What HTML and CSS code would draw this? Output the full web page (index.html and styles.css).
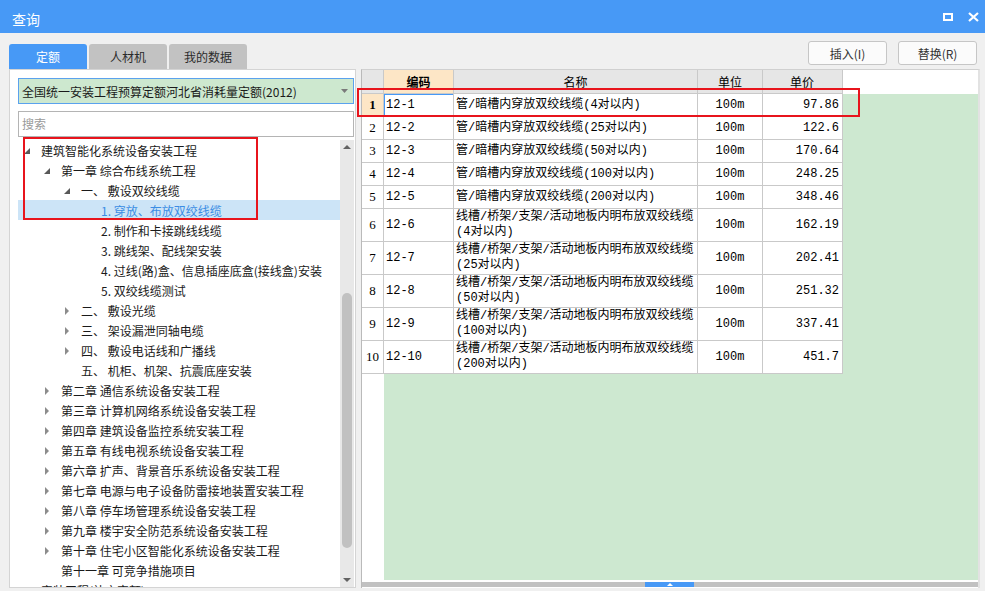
FILE: index.html
```html
<!DOCTYPE html>
<html lang="zh-CN">
<head>
<meta charset="utf-8">
<title>查询</title>
<link rel="stylesheet" href="styles.css">
</head>
<body>
<header class="titlebar">
  <span class="title">查询</span>
  <div class="winbtns">
    <svg class="ico" width="10" height="8" viewBox="0 0 10 8"><rect x="1" y="1" width="8" height="6" fill="none" stroke="#fff" stroke-width="2"/></svg>
    <svg class="ico" width="11" height="10" viewBox="0 0 11 10"><path d="M1 1L10 9M10 1L1 9" stroke="#fff" stroke-width="2.2" fill="none"/></svg>
  </div>
</header>
<div class="toolbar">
  <div class="tabs">
    <div class="tab active">定额</div>
    <div class="tab">人材机</div>
    <div class="tab">我的数据</div>
  </div>
  <div class="actions">
    <button class="btn">插入(I)</button>
    <button class="btn">替换(R)</button>
  </div>
</div>
<div class="content">
  <aside class="left">
    <div class="select"><span>全国统一安装工程预算定额河北省消耗量定额(2012)</span><svg class="caret" width="7" height="4" viewBox="0 0 7 4"><polygon points="0,0 7,0 3.5,4" fill="#7a7a7a"/></svg></div>
    <div class="search">搜索</div>
    <div class="treewrap">
      <ul class="tree">
        <li class="row l0"><span class="tg"><svg class="ex" width="6" height="6" viewBox="0 0 6 6"><polygon points="6,0 6,6 0,6"/></svg></span><span>建筑智能化系统设备安装工程</span></li>
        <li class="row l1"><span class="tg"><svg class="ex" width="6" height="6" viewBox="0 0 6 6"><polygon points="6,0 6,6 0,6"/></svg></span><span>第一章 综合布线系统工程</span></li>
        <li class="row l2"><span class="tg"><svg class="ex" width="6" height="6" viewBox="0 0 6 6"><polygon points="6,0 6,6 0,6"/></svg></span><span>一、 敷设双绞线缆</span></li>
        <li class="row l3 selected"><span class="tg"></span><span>1. 穿放、布放双绞线缆</span></li>
        <li class="row l3"><span class="tg"></span><span>2. 制作和卡接跳线线缆</span></li>
        <li class="row l3"><span class="tg"></span><span>3. 跳线架、配线架安装</span></li>
        <li class="row l3"><span class="tg"></span><span>4. 过线(路)盒、信息插座底盒(接线盒)安装</span></li>
        <li class="row l3"><span class="tg"></span><span>5. 双绞线缆测试</span></li>
        <li class="row l2"><span class="tg"><svg class="co" width="4" height="8" viewBox="0 0 4 8"><polygon points="0,0 4,4 0,8"/></svg></span><span>二、 敷设光缆</span></li>
        <li class="row l2"><span class="tg"><svg class="co" width="4" height="8" viewBox="0 0 4 8"><polygon points="0,0 4,4 0,8"/></svg></span><span>三、 架设漏泄同轴电缆</span></li>
        <li class="row l2"><span class="tg"><svg class="co" width="4" height="8" viewBox="0 0 4 8"><polygon points="0,0 4,4 0,8"/></svg></span><span>四、 敷设电话线和广播线</span></li>
        <li class="row l2"><span class="tg"></span><span>五、 机柜、机架、抗震底座安装</span></li>
        <li class="row l1"><span class="tg"><svg class="co" width="4" height="8" viewBox="0 0 4 8"><polygon points="0,0 4,4 0,8"/></svg></span><span>第二章 通信系统设备安装工程</span></li>
        <li class="row l1"><span class="tg"><svg class="co" width="4" height="8" viewBox="0 0 4 8"><polygon points="0,0 4,4 0,8"/></svg></span><span>第三章 计算机网络系统设备安装工程</span></li>
        <li class="row l1"><span class="tg"><svg class="co" width="4" height="8" viewBox="0 0 4 8"><polygon points="0,0 4,4 0,8"/></svg></span><span>第四章 建筑设备监控系统安装工程</span></li>
        <li class="row l1"><span class="tg"><svg class="co" width="4" height="8" viewBox="0 0 4 8"><polygon points="0,0 4,4 0,8"/></svg></span><span>第五章 有线电视系统设备安装工程</span></li>
        <li class="row l1"><span class="tg"><svg class="co" width="4" height="8" viewBox="0 0 4 8"><polygon points="0,0 4,4 0,8"/></svg></span><span>第六章 扩声、背景音乐系统设备安装工程</span></li>
        <li class="row l1"><span class="tg"><svg class="co" width="4" height="8" viewBox="0 0 4 8"><polygon points="0,0 4,4 0,8"/></svg></span><span>第七章 电源与电子设备防雷接地装置安装工程</span></li>
        <li class="row l1"><span class="tg"><svg class="co" width="4" height="8" viewBox="0 0 4 8"><polygon points="0,0 4,4 0,8"/></svg></span><span>第八章 停车场管理系统设备安装工程</span></li>
        <li class="row l1"><span class="tg"><svg class="co" width="4" height="8" viewBox="0 0 4 8"><polygon points="0,0 4,4 0,8"/></svg></span><span>第九章 楼宇安全防范系统设备安装工程</span></li>
        <li class="row l1"><span class="tg"><svg class="co" width="4" height="8" viewBox="0 0 4 8"><polygon points="0,0 4,4 0,8"/></svg></span><span>第十章 住宅小区智能化系统设备安装工程</span></li>
        <li class="row l1"><span class="tg"></span><span>第十一章 可竞争措施项目</span></li>
        <li class="row l0"><span class="tg"><svg class="co" width="4" height="8" viewBox="0 0 4 8"><polygon points="0,0 4,4 0,8"/></svg></span><span>安装工程(补充定额)</span></li>
      </ul>
      <div class="vscroll">
        <div class="varr"><svg width="8" height="4" viewBox="0 0 8 4"><polygon points="0,4 4,0 8,4" fill="#626262"/></svg></div>
        <div class="vthumb"></div>
        <div class="vspace"></div>
        <div class="varr"><svg width="8" height="4" viewBox="0 0 8 4"><polygon points="0,0 8,0 4,4" fill="#626262"/></svg></div>
      </div>
    </div>
  </aside>
  <section class="grid">
    <div class="gbody">
      <div class="grow ghead">
        <div class="c num"></div>
        <div class="c code hl"><b>编码</b></div>
        <div class="c name ctr">名称</div>
        <div class="c unit">单位</div>
        <div class="c price ctr">单价</div>
        <div class="fill"></div>
      </div>
      <div class="grow r1"><div class="c num cur">1</div><div class="c code sel">12-1</div><div class="c name"><span>管/暗槽内穿放双绞线缆(4对以内)</span></div><div class="c unit">100m</div><div class="c price">97.86</div><div class="fill"></div></div>
      <div class="grow r1"><div class="c num">2</div><div class="c code">12-2</div><div class="c name"><span>管/暗槽内穿放双绞线缆(25对以内)</span></div><div class="c unit">100m</div><div class="c price">122.6</div><div class="fill"></div></div>
      <div class="grow r1"><div class="c num">3</div><div class="c code">12-3</div><div class="c name"><span>管/暗槽内穿放双绞线缆(50对以内)</span></div><div class="c unit">100m</div><div class="c price">170.64</div><div class="fill"></div></div>
      <div class="grow r1"><div class="c num">4</div><div class="c code">12-4</div><div class="c name"><span>管/暗槽内穿放双绞线缆(100对以内)</span></div><div class="c unit">100m</div><div class="c price">248.25</div><div class="fill"></div></div>
      <div class="grow r1"><div class="c num">5</div><div class="c code">12-5</div><div class="c name"><span>管/暗槽内穿放双绞线缆(200对以内)</span></div><div class="c unit">100m</div><div class="c price">348.46</div><div class="fill"></div></div>
      <div class="grow r2"><div class="c num">6</div><div class="c code">12-6</div><div class="c name"><span>线槽/桥架/支架/活动地板内明布放双绞线缆<br>(4对以内)</span></div><div class="c unit">100m</div><div class="c price">162.19</div><div class="fill"></div></div>
      <div class="grow r2"><div class="c num">7</div><div class="c code">12-7</div><div class="c name"><span>线槽/桥架/支架/活动地板内明布放双绞线缆<br>(25对以内)</span></div><div class="c unit">100m</div><div class="c price">202.41</div><div class="fill"></div></div>
      <div class="grow r2"><div class="c num">8</div><div class="c code">12-8</div><div class="c name"><span>线槽/桥架/支架/活动地板内明布放双绞线缆<br>(50对以内)</span></div><div class="c unit">100m</div><div class="c price">251.32</div><div class="fill"></div></div>
      <div class="grow r2"><div class="c num">9</div><div class="c code">12-9</div><div class="c name"><span>线槽/桥架/支架/活动地板内明布放双绞线缆<br>(100对以内)</span></div><div class="c unit">100m</div><div class="c price">337.41</div><div class="fill"></div></div>
      <div class="grow r2"><div class="c num">10</div><div class="c code">12-10</div><div class="c name"><span>线槽/桥架/支架/活动地板内明布放双绞线缆<br>(200对以内)</span></div><div class="c unit">100m</div><div class="c price">451.7</div><div class="fill"></div></div>
      <div class="grow gempty"><div class="c num blank"></div><div class="fill"></div></div>
    </div>
    <div class="hscroll"><div class="hthumb"><svg width="6" height="3" viewBox="0 0 6 3"><polygon points="0,3 3,0 6,3" fill="#fff"/></svg></div></div>
  </section>
</div>
<div class="mark mark-tree"></div>
<div class="mark mark-row"></div>
</body>
</html>
```
FILE: styles.css
```css
* { box-sizing: border-box; }
html, body { margin: 0; padding: 0; }
body {
  width: 985px;
  height: 591px;
  overflow: hidden;
  position: relative;
  background: #f0f0f0;
  font-family: "Noto Sans CJK SC", "Microsoft YaHei", sans-serif;
  font-size: 12px;
  color: #1e1e1e;
}

/* title bar */
.titlebar {
  height: 33px;
  background: #4799f6;
  color: #fff;
  display: flex;
  align-items: center;
  padding: 0 6px 0 12px;
}
.title { font-size: 14px; padding-top: 4px; }
.winbtns { margin-left: auto; display: flex; align-items: center; gap: 15px; }
.ico { display: block; }

/* toolbar */
.toolbar {
  height: 36px;
  display: flex;
  justify-content: space-between;
  padding: 0 8px 0 9px;
}
.tabs { display: flex; gap: 2px; align-self: flex-end; }
.tab {
  width: 78px;
  height: 25px;
  line-height: 25px;
  text-align: center;
  background: #c2c2c2;
  color: #2b2b2b;
  border-radius: 3px 3px 0 0;
  font-size: 12px;
}
.tab.active { background: #4799f6; color: #fff; }
.actions { display: flex; gap: 11px; padding-top: 8px; }
.btn {
  width: 79px;
  height: 24px;
  padding: 0;
  border: 1px solid #c6c6c6;
  border-radius: 3px;
  background: #fbfbfb;
  color: #333;
  font-family: "Noto Sans CJK SC", sans-serif;
  font-size: 12px;
}

/* content */
.content {
  display: flex;
  gap: 5px;
  height: 519px;
  padding: 0 5px 0 9px;
}
.left {
  width: 347px;
  flex: none;
  background: #fff;
  border: 1px solid #d4d4d4;
  padding: 8px 1px 0 8px;
  display: flex;
  flex-direction: column;
  overflow: hidden;
}
.select {
  height: 26px;
  border: 1px solid #5aa2ee;
  background: #cde8cf;
  color: #1a1a1a;
  display: flex;
  align-items: center;
  justify-content: space-between;
  padding: 0 5px 0 3px;
  white-space: nowrap;
}
.caret { display: block; }
.search {
  margin-top: 7px;
  height: 26px;
  border: 1px solid #b4b4b4;
  color: #9a9a9a;
  line-height: 24px;
  padding-left: 3px;
}
.treewrap {
  margin-top: 3px;
  flex: 1;
  min-height: 0;
  display: flex;
}
.tree {
  flex: 1;
  margin: 0;
  padding: 0;
  list-style: none;
  overflow: hidden;
}
.row {
  height: 20px;
  display: flex;
  align-items: center;
  white-space: nowrap;
  color: #1a1a1a;
  padding-top: 1px;
}
.row.l1 { padding-left: 20px; }
.row.l2 { padding-left: 40px; }
.row.l3 { padding-left: 60px; }
.row.selected { background: #cce4f7; color: #3b8de4; }
.tg {
  width: 23px;
  flex: none;
  display: flex;
  align-items: center;
  padding-left: 6px;
}
.tg .ex { display: block; fill: #595959; margin-top: 1px; }
.tg .co { display: block; fill: #8c8c8c; margin-left: 1px; }

.vscroll {
  width: 14px;
  flex: none;
  background: #e8e8e8;
  display: flex;
  flex-direction: column;
}
.varr {
  height: 14px;
  display: flex;
  align-items: center;
  justify-content: center;
}
.varr svg { display: block; }
.vthumb {
  margin: 139px 0 0 2px;
  width: 10px;
  height: 255px;
  border-radius: 5px;
  background: #c1c1c1;
}
.vspace { flex: 1; }

/* grid */
.grid {
  flex: 1;
  background: #fff;
  border-top: 1px solid #d0d0d0;
  border-left: 1px solid #bababa;
  border-right: 2px solid #e2e2e2;
  display: flex;
  flex-direction: column;
}
.gbody {
  flex: 1;
  min-height: 0;
  display: flex;
  flex-direction: column;
}
.grow { display: flex; flex: none; }
.ghead { height: 24px; }
.r1 { height: 23px; }
.r2 { height: 33px; }
.gempty { flex: 1; }
.c {
  flex: none;
  display: flex;
  align-items: center;
  border-right: 1px solid #c9c9c9;
  border-bottom: 1px solid #c9c9c9;
  padding: 0 2px;
  white-space: nowrap;
  overflow: hidden;
  font-family: "Liberation Mono", "Noto Sans CJK SC", monospace;
  font-size: 12px;
  color: #000;
  background: #fff;
}
.c span { line-height: 15px; }
.num {
  width: 22px;
  justify-content: center;
  padding: 0;
  font-family: "Liberation Serif", "Noto Sans CJK SC", serif;
  font-size: 13px;
}
.code { width: 70px; }
.name { width: 244px; }
.unit { width: 65px; justify-content: center; }
.price { width: 80px; justify-content: flex-end; padding-right: 3px; }
.ctr { justify-content: center; }
.ghead .c { background: #e6e6e6; justify-content: center; }
.ghead .c.hl { background: #fde6c6; }
.num.cur { background: #fde6c6; font-weight: bold; }
.sel { box-shadow: inset 1px 0 0 #4799f6, inset 0 1px 0 #4799f6, inset 0 -1px 0 #4799f6; }
.fill { flex: 1; background: #cde8d0; }
.ghead .fill { background: #fff; }
.num.blank { border: none; }

.hscroll {
  height: 5px;
  margin: 2px 0 1px;
  background: #c1c1c1;
  display: flex;
  padding-left: 283px;
}
.hthumb {
  width: 49px;
  background: #4799f6;
  display: flex;
  align-items: center;
  justify-content: center;
}
.hthumb svg { display: block; }

/* annotation marks */
.mark { position: absolute; border: 2px solid #e8141c; pointer-events: none; }
.mark-tree { left: 23px; top: 137px; width: 235px; height: 83px; }
.mark-row { left: 357px; top: 88px; width: 503px; height: 29px; }
```
